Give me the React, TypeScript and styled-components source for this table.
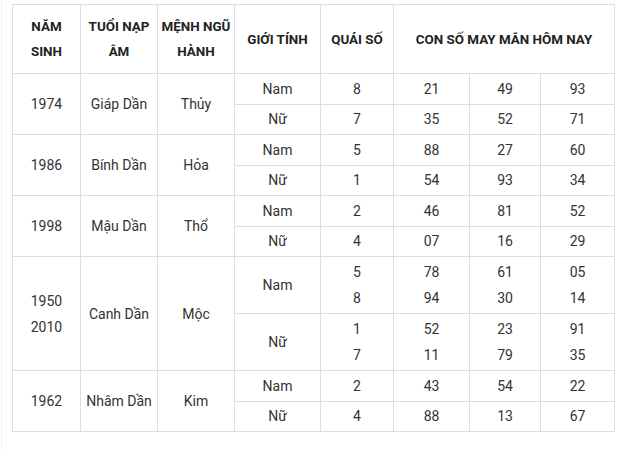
import React from 'react';
import styled, { createGlobalStyle } from 'styled-components';

const GlobalStyle = createGlobalStyle`
  html, body {
    margin: 0;
    padding: 0;
    background: #fff;
  }
  body {
    font-family: Roboto, "Liberation Sans", Arial, sans-serif;
  }
`;

const Page = styled.div`
  margin-left: 1px;
  min-height: 449px;
  border-left: 1px solid #f0f0f0;
  padding: 4px 0 0 10px;
  box-sizing: border-box;
`;

const Table = styled.table`
  border-collapse: collapse;
  table-layout: fixed;
  width: 602px;
  font-size: 14px;
  color: #333;
`;

const Col = styled.col<{ $w: number }>`
  width: ${({ $w }) => $w}px;
`;

const HeadCell = styled.th`
  border: 1px solid #dedede;
  padding: 8px 0;
  line-height: 25px;
  font-size: 13.4px;
  font-weight: 700;
  color: #222;
  text-align: center;
  vertical-align: middle;
  height: 52px;
  white-space: nowrap;
`;

const Cell = styled.td<{ $tall?: boolean }>`
  border: 1px solid #dedede;
  padding: 2px 4px;
  line-height: ${({ $tall }) => ($tall ? '26px' : '24px')};
  text-align: center;
  vertical-align: middle;
  height: ${({ $tall }) => ($tall ? '52px' : '25.5px')};
`;

type Sub = { gender: string; quai: string[]; nums: string[][] };
type Group = { years: string[]; tuoi: string; menh: string; subs: Sub[] };

const widths = [68, 77, 77, 86, 73, 76, 71, 74];

const groups: Group[] = [
  {
    years: ['1974'],
    tuoi: 'Giáp Dần',
    menh: 'Thủy',
    subs: [
      { gender: 'Nam', quai: ['8'], nums: [['21', '49', '93']] },
      { gender: 'Nữ', quai: ['7'], nums: [['35', '52', '71']] },
    ],
  },
  {
    years: ['1986'],
    tuoi: 'Bính Dần',
    menh: 'Hỏa',
    subs: [
      { gender: 'Nam', quai: ['5'], nums: [['88', '27', '60']] },
      { gender: 'Nữ', quai: ['1'], nums: [['54', '93', '34']] },
    ],
  },
  {
    years: ['1998'],
    tuoi: 'Mậu Dần',
    menh: 'Thổ',
    subs: [
      { gender: 'Nam', quai: ['2'], nums: [['46', '81', '52']] },
      { gender: 'Nữ', quai: ['4'], nums: [['07', '16', '29']] },
    ],
  },
  {
    years: ['1950', '2010'],
    tuoi: 'Canh Dần',
    menh: 'Mộc',
    subs: [
      { gender: 'Nam', quai: ['5', '8'], nums: [['78', '61', '05'], ['94', '30', '14']] },
      { gender: 'Nữ', quai: ['1', '7'], nums: [['52', '23', '91'], ['11', '79', '35']] },
    ],
  },
  {
    years: ['1962'],
    tuoi: 'Nhâm Dần',
    menh: 'Kim',
    subs: [
      { gender: 'Nam', quai: ['2'], nums: [['43', '54', '22']] },
      { gender: 'Nữ', quai: ['4'], nums: [['88', '13', '67']] },
    ],
  },
];

const Lines = ({ items }: { items: string[] }) => (
  <>
    {items.map((t, i) => (
      <React.Fragment key={i}>
        {i > 0 && <br />}
        {t}
      </React.Fragment>
    ))}
  </>
);

export default function App() {
  return (
    <Page>
      <GlobalStyle />
      <Table>
        <colgroup>
          {widths.map((w, i) => (
            <Col key={i} $w={w} />
          ))}
        </colgroup>
        <thead>
          <tr>
            <HeadCell>NĂM<br />SINH</HeadCell>
            <HeadCell>TUỔI NẠP<br />ÂM</HeadCell>
            <HeadCell>MỆNH NGŨ<br />HÀNH</HeadCell>
            <HeadCell>GIỚI TÍNH</HeadCell>
            <HeadCell>QUÁI SỐ</HeadCell>
            <HeadCell colSpan={3}>CON SỐ MAY MẮN HÔM NAY</HeadCell>
          </tr>
        </thead>
        <tbody>
          {groups.map((g) =>
            g.subs.map((s, si) => {
              const tall = s.quai.length > 1;
              return (
                <tr key={g.tuoi + s.gender}>
                  {si === 0 && (
                    <>
                      <Cell rowSpan={g.subs.length} $tall={g.years.length > 1}>
                        <Lines items={g.years} />
                      </Cell>
                      <Cell rowSpan={g.subs.length}>{g.tuoi}</Cell>
                      <Cell rowSpan={g.subs.length}>{g.menh}</Cell>
                    </>
                  )}
                  <Cell $tall={tall}>{s.gender}</Cell>
                  <Cell $tall={tall}>
                    <Lines items={s.quai} />
                  </Cell>
                  {[0, 1, 2].map((c) => (
                    <Cell key={c} $tall={tall}>
                      <Lines items={s.nums.map((row) => row[c])} />
                    </Cell>
                  ))}
                </tr>
              );
            })
          )}
        </tbody>
      </Table>
    </Page>
  );
}
